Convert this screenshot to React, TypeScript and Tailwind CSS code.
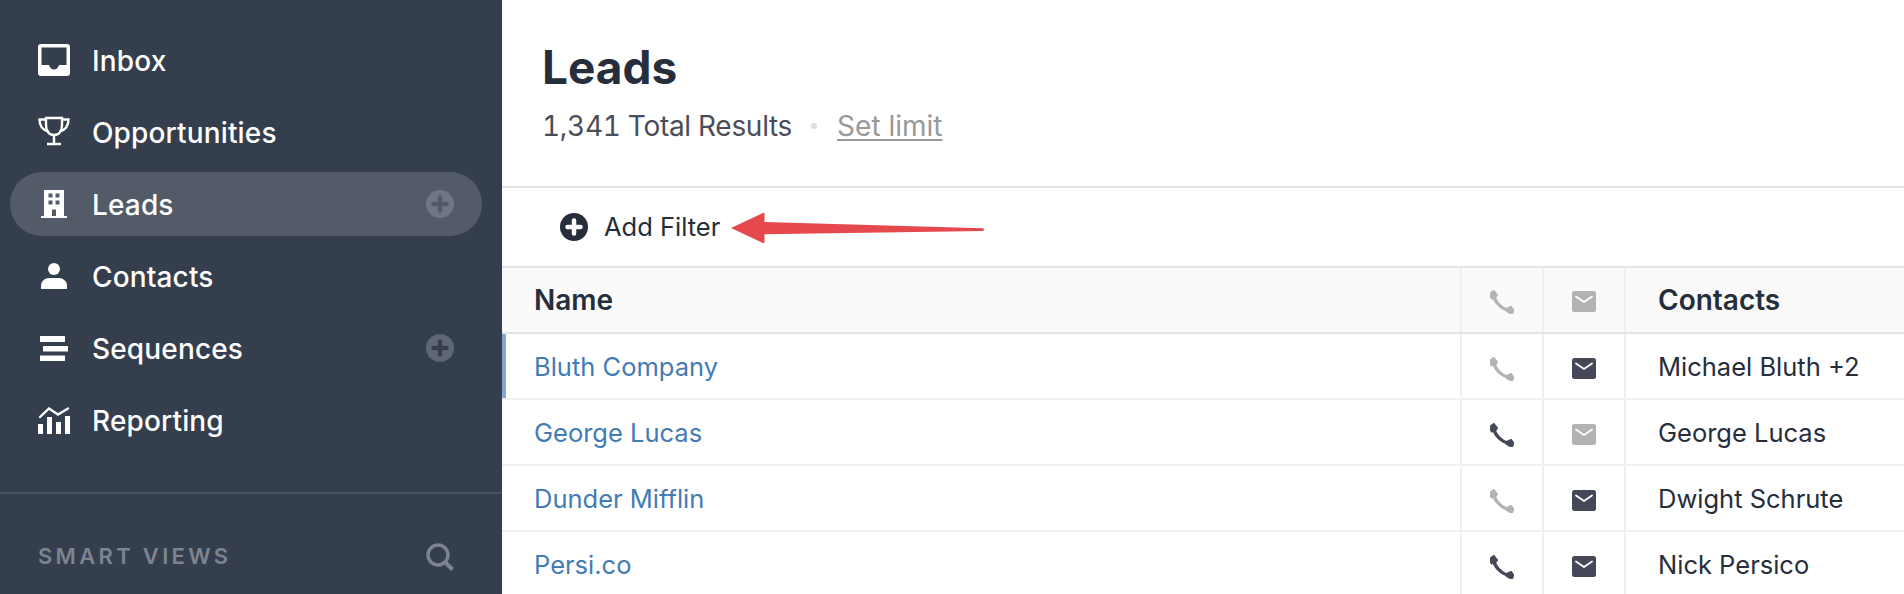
import type { ReactNode } from 'react'

const FONT = "font-['Inter','Liberation_Sans',sans-serif]"

function InboxIcon() {
  return (
    <svg viewBox="0 0 32 32" className="h-8 w-8" fill="none">
      <path
        fillRule="evenodd"
        clipRule="evenodd"
        d="M3 0h26a3 3 0 0 1 3 3v26a3 3 0 0 1-3 3H3a3 3 0 0 1-3-3V3a3 3 0 0 1 3-3Zm.5 3.500v17.500h7.500c1 3 2.700 4.500 5 4.500s4-1.500 5-4.500h7.500V3.500Z"
        fill="#fff"
      />
    </svg>
  )
}

function TrophyIcon() {
  return (
    <svg viewBox="0 0 32 32" className="h-8 w-8" fill="none" stroke="#fff" strokeWidth="2.400">
      <path d="M8 2h16v7c0 6-3 10-8 10S8 15 8 9Z" />
      <path d="M8 3.500H1.500c0 6 3 10.500 9 12M24 3.500h6.500c0 6-3 10.500-9 12" />
      <path d="M16 19v8M9 28h14" />
    </svg>
  )
}

function BuildingIcon() {
  return (
    <svg viewBox="0 0 26 28" className="h-7 w-[26px]">
      <path
        fillRule="evenodd"
        d="M3 0h20v26h3v2H0v-2h3Zm4.500 3.500v4h4v-4Zm7 0v4h4v-4Zm-7 7v4h4v-4Zm7 0v4h4v-4Zm-3.500 9v6.500h4v-6.500Z"
        fill="#fff"
      />
    </svg>
  )
}

function UserIcon() {
  return (
    <svg viewBox="0 0 26 26" className="h-[26px] w-[26px]" fill="#fff">
      <circle cx="13" cy="6" r="6" />
      <path d="M0 23c0-5 4-8 8-8h10c4 0 8 3 8 8v3H0Z" />
    </svg>
  )
}

function SequencesIcon() {
  return (
    <svg viewBox="0 0 28 25" className="h-[25px] w-7" fill="#fff">
      <rect x="0" y="0" width="25" height="6" rx="0.500" />
      <rect x="3" y="10" width="25" height="5.500" rx="0.500" />
      <rect x="0" y="19.500" width="25" height="5.500" rx="0.500" />
    </svg>
  )
}

function ReportingIcon() {
  return (
    <svg viewBox="0 0 32 28" className="h-7 w-8">
      <g fill="#fff">
        <rect x="0" y="18" width="5" height="10" />
        <rect x="9" y="11" width="5" height="17" />
        <rect x="18" y="16" width="5" height="12" />
        <rect x="27" y="10" width="5" height="18" />
      </g>
      <path d="M2 11 11 2.500l9 6 10-6" fill="none" stroke="#fff" strokeWidth="2.400" strokeLinecap="round" />
    </svg>
  )
}

function PlusCircle({ circle, plus, size = 28 }: { circle: string; plus: string; size?: number }) {
  return (
    <svg viewBox="0 0 28 28" width={size} height={size}>
      <circle cx="14" cy="14" r="14" fill={circle} />
      <path d="M14 7.500v13M7.500 14h13" stroke={plus} strokeWidth="4.500" strokeLinecap="round" />
    </svg>
  )
}

function PhoneIcon({ color }: { color: string }) {
  return (
    <svg viewBox="0 0 24 24" className="h-6 w-6" fill="none">
      <path d="M3.500 4c.6 7.500 8 15.500 16.500 16.500" stroke={color} strokeWidth="3.400" />
      <path d="M4 .5 1 2.500C-.2 3.800.2 6.500 1.500 9l4-1 2-3ZM23.700 19.800 21 16.500l-3 1.200-2 3c2.800 2.500 5.500 3.500 6.800 2.300Z" fill={color} stroke={color} strokeWidth="1.200" strokeLinejoin="round" />
    </svg>
  )
}

function MailIcon({ color }: { color: string }) {
  return (
    <svg viewBox="0 0 24 21" className="h-[21px] w-6">
      <rect width="24" height="21" rx="2.500" fill={color} />
      <path d="M4 5.500 12 11l8-5.500" fill="none" stroke="#fff" strokeWidth="1.800" strokeLinecap="round" strokeLinejoin="round" />
    </svg>
  )
}

function SearchIcon() {
  return (
    <svg viewBox="0 0 28 28" className="h-7 w-7" fill="none" stroke="#7c8490" strokeWidth="3.400">
      <circle cx="12" cy="12" r="10" />
      <path d="M19 19l7.500 7.500" strokeWidth="4" />
    </svg>
  )
}

type NavItem = { label: string; icon: ReactNode; active?: boolean; add?: boolean }

const NAV: NavItem[] = [
  { label: 'Inbox', icon: <InboxIcon /> },
  { label: 'Opportunities', icon: <TrophyIcon /> },
  { label: 'Leads', icon: <BuildingIcon />, active: true, add: true },
  { label: 'Contacts', icon: <UserIcon /> },
  { label: 'Sequences', icon: <SequencesIcon />, add: true },
  { label: 'Reporting', icon: <ReportingIcon /> },
]

const ROWS = [
  { name: 'Bluth Company', phone: false, mail: true, contact: 'Michael Bluth +2', selected: true },
  { name: 'George Lucas', phone: true, mail: false, contact: 'George Lucas' },
  { name: 'Dunder Mifflin', phone: false, mail: true, contact: 'Dwight Schrute' },
  { name: 'Persi.co', phone: true, mail: true, contact: 'Nick Persico' },
]

const DARK = '#454856'
const LIGHT = '#b3b3b3'

function Sidebar() {
  return (
    <aside className="w-[502px] shrink-0 bg-[#353e4d] pt-7 text-white">
      <nav className="flex flex-col gap-2 pl-[10px] pr-5">
        {NAV.map((item) => (
          <div
            key={item.label}
            className={`flex h-16 items-center rounded-full pl-7 pr-7 ${item.active ? 'bg-[#535b69]' : ''}`}
          >
            <span className="flex w-8 justify-center">{item.icon}</span>
            <span className="ml-[22px] flex-1 pt-[2px] text-[28px] font-medium tracking-[0.15px]">{item.label}</span>
            {item.add && <PlusCircle circle={item.active ? '#707784' : '#5f6774'} plus={item.active ? '#535b69' : '#353e4d'} />}
          </div>
        ))}
      </nav>
      <div className="mt-10 border-t-2 border-[#4a5361]" />
      <div className="flex items-center justify-between pl-[38px] pr-[48px] pt-[46px]">
        <span className="text-[22px] font-semibold uppercase tracking-[0.15em] text-[#7c8490]">Smart Views</span>
        <SearchIcon />
      </div>
    </aside>
  )
}

function Arrow() {
  return (
    <svg className="absolute left-[228px] top-[20px]" width="258" height="36" viewBox="0 0 258 36">
      <path
        d="M1 20 33 5c1-.400 1.500 0 1.500 1v8l218 6.200c2 .100 2 2.600 0 2.800l-218 3.200v7.800c0 1-.500 1.400-1.500 1Z"
        fill="#e5484d"
      />
    </svg>
  )
}

function Table() {
  return (
    <div>
      <div className="grid h-[66px] grid-cols-[1fr_82px_82px_280px] border-b-2 border-[#e3e3e3] bg-[#fafafa] text-[28px] font-semibold text-[#252e3a]">
        <div className="flex items-center pl-8">Name</div>
        <div className="flex items-center justify-center border-l-2 border-[#f0f0f0] pt-[3px]"><PhoneIcon color={LIGHT} /></div>
        <div className="flex items-center justify-center border-l-2 border-[#f0f0f0] pt-[3px]"><MailIcon color={LIGHT} /></div>
        <div className="flex items-center border-l-2 border-[#f0f0f0] pl-8">Contacts</div>
      </div>
      {ROWS.map((row) => (
        <div
          key={row.name}
          className="grid h-[66px] grid-cols-[1fr_82px_82px_280px] border-b-2 border-[#f0f0f0] text-[25.5px] text-[#252e3a]"
        >
          <div className={`flex items-center pt-[2px] text-[#437bb5] ${row.selected ? 'border-l-4 border-[#86a6cf] pl-7' : 'pl-8'}`}>
            {row.name}
          </div>
          <div className="flex items-center justify-center border-l-2 border-[#f0f0f0] pt-[5px]">
            <PhoneIcon color={row.phone ? DARK : LIGHT} />
          </div>
          <div className="flex items-center justify-center border-l-2 border-[#f0f0f0] pt-1">
            <MailIcon color={row.mail ? DARK : LIGHT} />
          </div>
          <div className="flex items-center border-l-2 border-[#f0f0f0] pl-8 pt-[2px]">{row.contact}</div>
        </div>
      ))}
    </div>
  )
}

export default function App() {
  return (
    <div className={`flex h-[594px] w-[1904px] overflow-hidden bg-white ${FONT}`}>
      <Sidebar />
      <main className="min-w-0 flex-1">
        <header className="h-[188px] border-b-2 border-[#e3e3e3] pl-10 pt-[39px]">
          <h1 className="text-[46px] font-bold leading-[56px] text-[#252e3a]">Leads</h1>
          <div className="mt-[15px] flex items-center text-[28px] leading-8 text-[#4b4e5a]">
            <span className="tabular-nums tracking-[-0.3px]">1,341 Total Results</span>
            <span className="ml-[19px] h-[6px] w-[6px] rounded-full bg-[#dddddd]" />
            <a className="ml-[20px] text-[#999999] underline underline-offset-[3px]">Set limit</a>
          </div>
        </header>
        <div className="relative flex h-20 items-center border-b-2 border-[#e3e3e3] pl-[58px] text-[25.5px] text-[#252e3a]">
          <PlusCircle circle="#252e3a" plus="#ffffff" />
          <span className="ml-4">Add Filter</span>
          <Arrow />
        </div>
        <Table />
      </main>
    </div>
  )
}
